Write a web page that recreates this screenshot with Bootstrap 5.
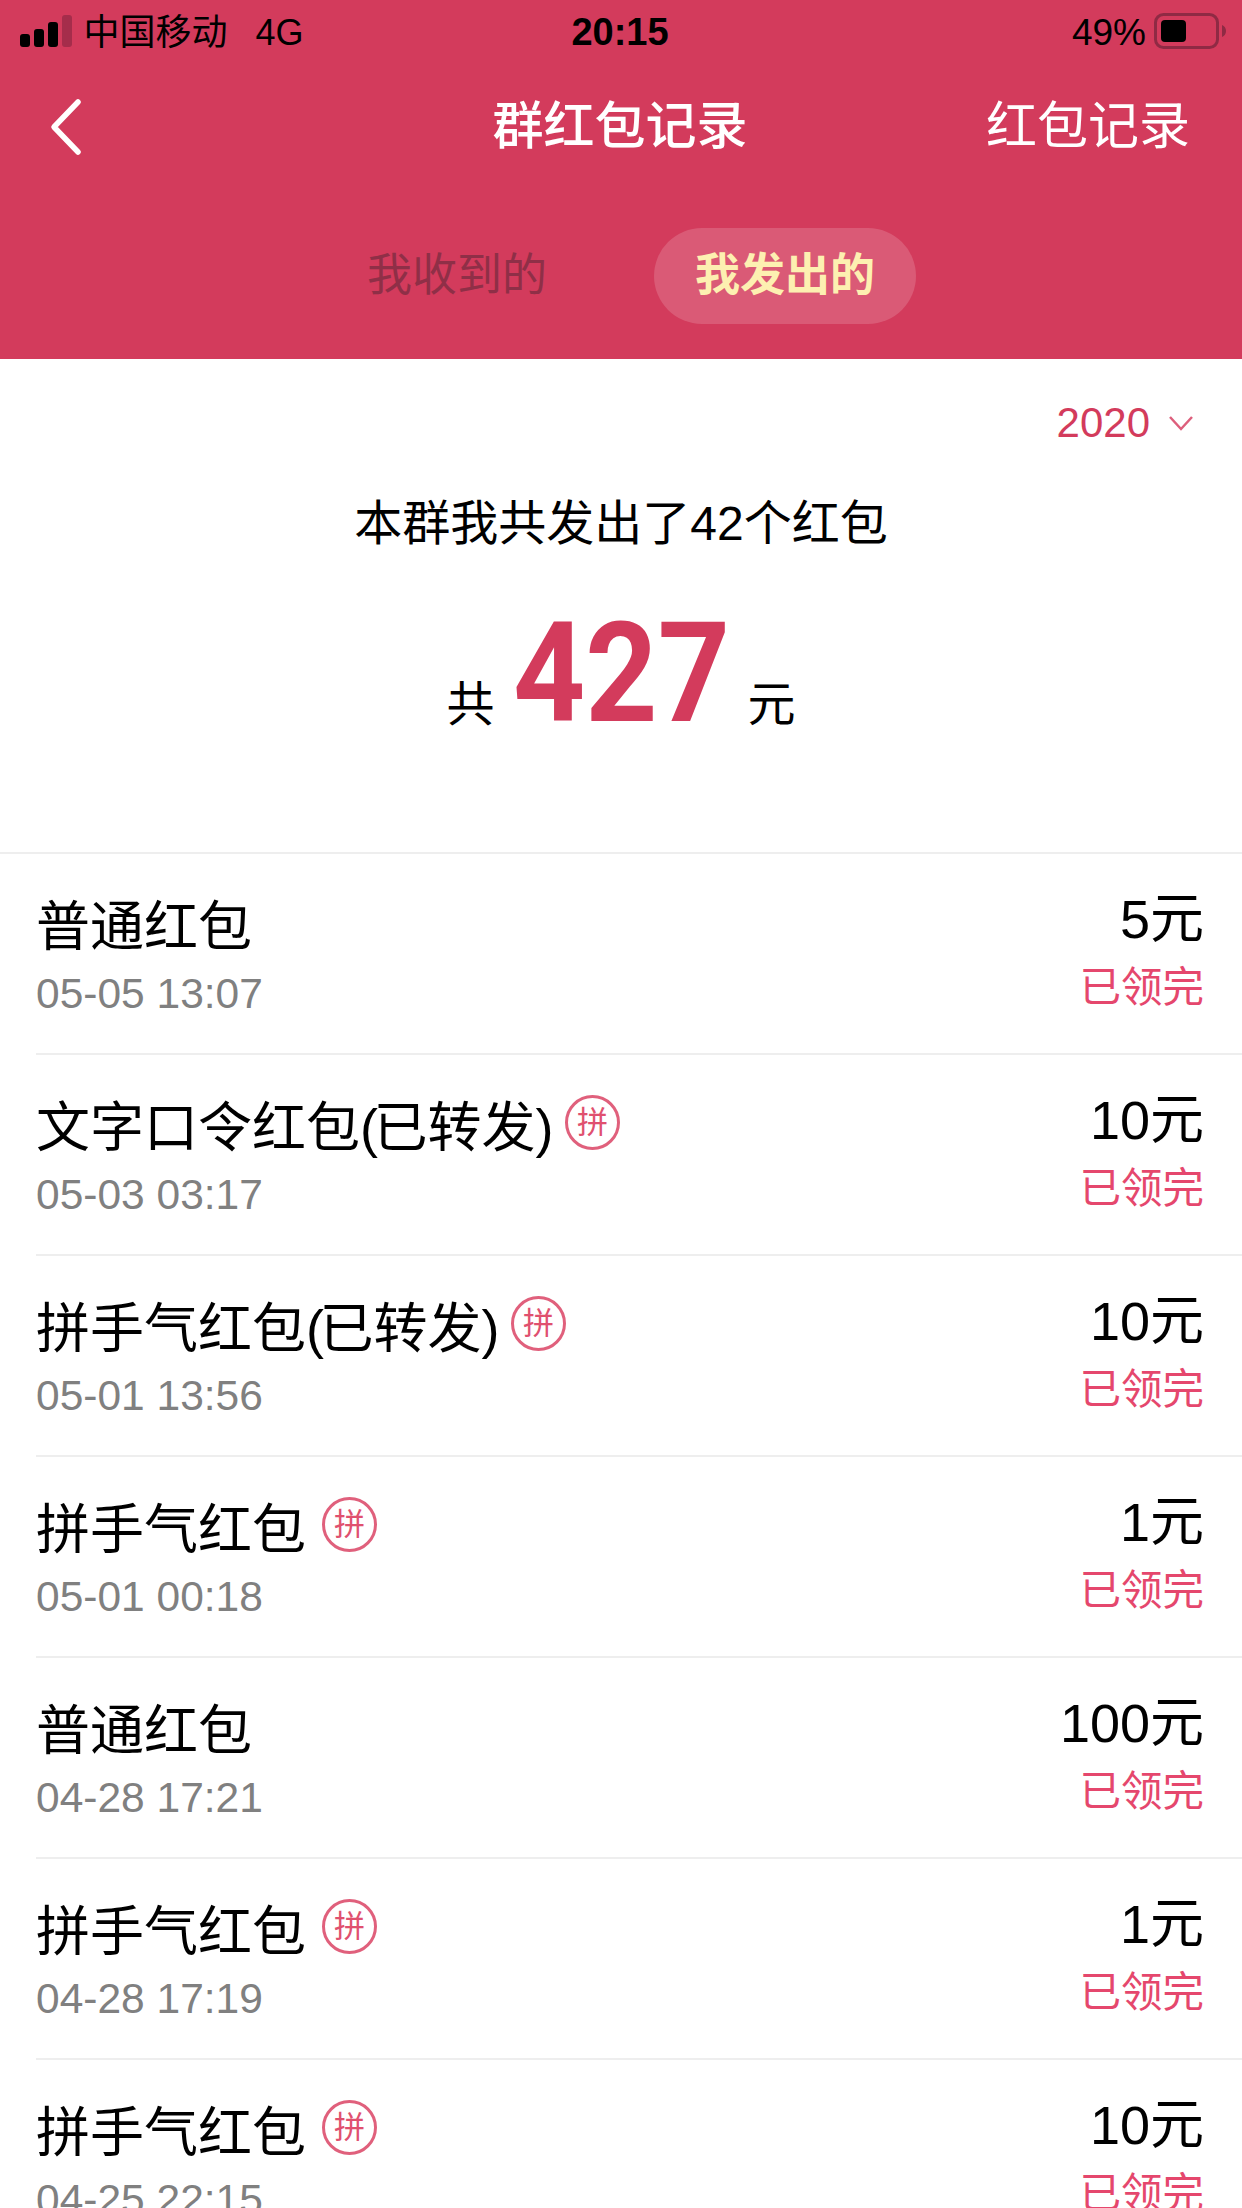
<!DOCTYPE html>
<html lang="zh-CN">
<head>
<meta charset="utf-8">
<title>群红包记录</title>
<link rel="stylesheet" href="https://cdn.jsdelivr.net/npm/bootstrap@5.3.0/dist/css/bootstrap.min.css">
<style>
html,body{height:2208px;overflow:hidden;background:#fff}
body{font-family:"Liberation Sans","Noto Sans CJK SC",sans-serif;color:#000}
.screen{width:1242px;height:2208px;overflow:hidden}
.hdr{background:#d33b5c;height:359px}
.sbar{height:62px;padding:3px 16px 0 20px;font-size:36px;line-height:59px}
.sbar-side{flex:1 1 0}
.sig{gap:4.5px;align-items:flex-end;height:32px;margin:0 12px 3px 0}
.sig i{display:block;width:9.5px;background:#000;border-radius:3px}
.sig i:nth-child(1){height:13px}
.sig i:nth-child(2){height:18px}
.sig i:nth-child(3){height:25px}
.sig i:nth-child(4){height:32px;background:#a52d4b}
.net{margin-left:28px}
.clock{font-weight:700;font-size:38px;margin-right:6px}
.batt-pct{font-size:37px;margin-right:8px}
.batt{margin-bottom:3px}
.nav-row{height:126px;padding:3px 52px 0 50px;color:#fff}
.nav-side{flex:1 1 0}
.nav-title{font-size:51px;font-weight:500;line-height:60px}
.nav-link-txt{font-size:51px;line-height:60px}
.tabs{margin-top:40px;gap:66px}
.tab-item{font-size:45px;line-height:96px;height:96px;padding:0 41px;color:#8f2f47}
.tab-on{background:rgba(255,255,255,.16);color:#fdf0b1;font-weight:700;border-radius:48px}
.sum{height:493px;padding-top:39px}
.year{padding-right:48px;font-size:42px;line-height:50px;color:#d33b5c;gap:18px}
.sum-head{margin-top:46px;font-size:48px;line-height:60px}
.sum-total{margin-top:44px;gap:18px;font-size:48px;line-height:150px}
.big{display:inline-block;margin:0 -12px;font-family:Roboto,"Liberation Sans",sans-serif;font-size:140px;font-weight:700;color:#d33b5c;line-height:150px;transform:scaleX(.9)}
.recs{--bs-list-group-border-width:0;--bs-list-group-bg:transparent;--bs-list-group-color:#000;border-top:2px solid #eee}
.rec{height:201px;padding:0;margin-left:36px;border-bottom:2px solid #eee!important}
.rec-l{padding-top:38px}
.rec-r{padding:30px 38px 0 0}
.rec-name{font-size:54px;line-height:70px;gap:16px}
.paren{letter-spacing:-4.5px}
.rec-time{margin-top:7px;font-size:42.5px;line-height:50px;color:#808080}
.rec-amt{font-size:54px;line-height:70px}
.rec-st{margin-top:9px;font-size:41.5px;line-height:50px;color:#e5476d}
.pin{width:55px;height:55px;margin-bottom:11px;border:3px solid #e0607c;color:#e0506f;font-size:31px;line-height:1}
</style>
</head>
<body>
<div class="screen">
  <header class="hdr">
    <div class="sbar d-flex align-items-center">
      <div class="sbar-side d-flex align-items-center">
        <span class="sig d-flex"><i></i><i></i><i></i><i></i></span>
        <span>中国移动</span><span class="net">4G</span>
      </div>
      <div class="clock">20:15</div>
      <div class="sbar-side d-flex align-items-center justify-content-end">
        <span class="batt-pct">49%</span>
        <svg class="batt" width="72" height="36" viewBox="0 0 72 36" aria-hidden="true">
          <rect x="1.500" y="1.500" width="62" height="33" rx="8" fill="none" stroke="#8f2a44" stroke-width="3"/>
          <rect x="7" y="7" width="25" height="22" rx="4" fill="#000"/>
          <path d="M68 12c2.500 1 4 3 4 6s-1.500 5-4 6z" fill="#8f2a44"/>
        </svg>
      </div>
    </div>
    <div class="nav-row d-flex align-items-center">
      <div class="nav-side">
        <svg width="32" height="58" viewBox="0 0 32 58" aria-hidden="true"><path d="M28 4 4 29l24 25" fill="none" stroke="#fff" stroke-width="5.500" stroke-linecap="round" stroke-linejoin="round"/></svg>
      </div>
      <div class="nav-title">群红包记录</div>
      <div class="nav-side text-end nav-link-txt">红包记录</div>
    </div>
    <div class="tabs d-flex justify-content-center">
      <div class="tab-item">我收到的</div>
      <div class="tab-item tab-on">我发出的</div>
    </div>
  </header>

  <section class="sum">
    <div class="year d-flex justify-content-end align-items-center">
      <span>2020</span>
      <svg width="26" height="16" viewBox="0 0 26 16" aria-hidden="true"><path d="M2 2l11 12L24 2" fill="none" stroke="#dd5f7c" stroke-width="2.500"/></svg>
    </div>
    <div class="sum-head text-center">本群我共发出了42个红包</div>
    <div class="sum-total d-flex justify-content-center align-items-baseline">
      <span>共</span><span class="big">427</span><span>元</span>
    </div>
  </section>

  <ul class="list-group list-group-flush recs rounded-0">
    <li class="list-group-item rec d-flex justify-content-between">
      <div class="rec-l"><div class="rec-name d-flex align-items-center">普通红包</div><div class="rec-time">05-05 13:07</div></div>
      <div class="rec-r text-end"><div class="rec-amt">5元</div><div class="rec-st">已领完</div></div>
    </li>
    <li class="list-group-item rec d-flex justify-content-between">
      <div class="rec-l"><div class="rec-name d-flex align-items-center"><span>文字口令红包<span class="paren">(</span>已转发<span class="paren">)</span></span><span class="pin rounded-circle d-inline-flex align-items-center justify-content-center">拼</span></div><div class="rec-time">05-03 03:17</div></div>
      <div class="rec-r text-end"><div class="rec-amt">10元</div><div class="rec-st">已领完</div></div>
    </li>
    <li class="list-group-item rec d-flex justify-content-between">
      <div class="rec-l"><div class="rec-name d-flex align-items-center"><span>拼手气红包<span class="paren">(</span>已转发<span class="paren">)</span></span><span class="pin rounded-circle d-inline-flex align-items-center justify-content-center">拼</span></div><div class="rec-time">05-01 13:56</div></div>
      <div class="rec-r text-end"><div class="rec-amt">10元</div><div class="rec-st">已领完</div></div>
    </li>
    <li class="list-group-item rec d-flex justify-content-between">
      <div class="rec-l"><div class="rec-name d-flex align-items-center">拼手气红包<span class="pin rounded-circle d-inline-flex align-items-center justify-content-center">拼</span></div><div class="rec-time">05-01 00:18</div></div>
      <div class="rec-r text-end"><div class="rec-amt">1元</div><div class="rec-st">已领完</div></div>
    </li>
    <li class="list-group-item rec d-flex justify-content-between">
      <div class="rec-l"><div class="rec-name d-flex align-items-center">普通红包</div><div class="rec-time">04-28 17:21</div></div>
      <div class="rec-r text-end"><div class="rec-amt">100元</div><div class="rec-st">已领完</div></div>
    </li>
    <li class="list-group-item rec d-flex justify-content-between">
      <div class="rec-l"><div class="rec-name d-flex align-items-center">拼手气红包<span class="pin rounded-circle d-inline-flex align-items-center justify-content-center">拼</span></div><div class="rec-time">04-28 17:19</div></div>
      <div class="rec-r text-end"><div class="rec-amt">1元</div><div class="rec-st">已领完</div></div>
    </li>
    <li class="list-group-item rec d-flex justify-content-between">
      <div class="rec-l"><div class="rec-name d-flex align-items-center">拼手气红包<span class="pin rounded-circle d-inline-flex align-items-center justify-content-center">拼</span></div><div class="rec-time">04-25 22:15</div></div>
      <div class="rec-r text-end"><div class="rec-amt">10元</div><div class="rec-st">已领完</div></div>
    </li>
  </ul>
</div>
<script src="https://cdn.jsdelivr.net/npm/bootstrap@5.3.0/dist/js/bootstrap.bundle.min.js"></script>
</body>
</html>
